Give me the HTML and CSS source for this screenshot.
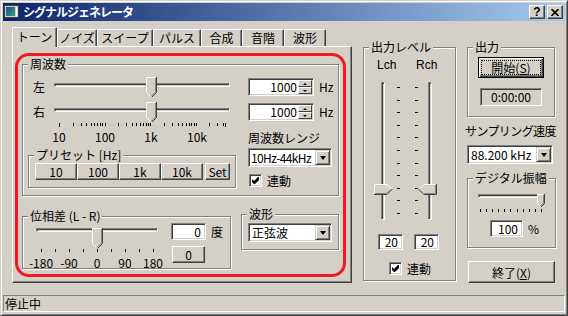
FILE: index.html
```html
<!DOCTYPE html>
<html lang="ja">
<head>
  <meta charset="UTF-8">
  <title>シグナルジェネレータ</title>
  <link rel="stylesheet" href="styles.css">
</head>
<body>
  <div class="window">
    <div class="titlebar">
      <svg class="app-icon" width="16" height="16" viewBox="0 0 16 16">
        <defs>
          <linearGradient id="scr" x1="0" y1="0" x2="1" y2="1">
            <stop offset="0" stop-color="#1c4f9c"/>
            <stop offset="1" stop-color="#34a070"/>
          </linearGradient>
        </defs>
        <rect x="0.5" y="1.5" width="14" height="12" fill="#d4d0c8" stroke="#404040"/>
        <rect x="2" y="3" width="9" height="9" fill="url(#scr)"/>
        <rect x="12" y="3" width="1" height="9" fill="#fff"/>
      </svg>
      <span class="title">シグナルジェネレータ</span>
      <span class="cap-btn">?</span>
      <span class="cap-btn close">
        <svg width="8" height="7" viewBox="0 0 8 7"><path d="M0.5 0L7.5 7M7.5 0L0.5 7" stroke="#000" stroke-width="1.6"/></svg>
      </span>
    </div>

    <div class="client">
      <div class="tabctl">
        <div class="tabstrip">
          <span class="tab active">トーン</span>
          <span class="tab">ノイズ</span>
          <span class="tab">スイープ</span>
          <span class="tab">パルス</span>
          <span class="tab">合成</span>
          <span class="tab">音階</span>
          <span class="tab">波形</span>
        </div>
        <div class="tabpanel">
          <div class="group freq">
            <span class="group-title">周波数</span>
            <div class="freq-body">
              <div class="freq-left">
                <div class="slider-row first">
                  <span class="slider-label">左</span>
                  <div class="hslider wide">
                    <div class="track"></div>
                    <svg class="thumb" style="left:92px" width="11" height="20" viewBox="0 0 11 20">
                      <path d="M0 0H10V15L5 20L0 15Z" fill="#d4d0c8"/>
                      <path d="M0.5 15V0.5H9.5M0.5 15.5L5 20" fill="none" stroke="#fff"/>
                      <path d="M10.5 0V15.5L5.5 20.5" fill="none" stroke="#404040"/>
                      <path d="M9.5 1V15L5 19.5" fill="none" stroke="#808080"/>
                    </svg>
                  </div>
                </div>
                <div class="slider-row">
                  <span class="slider-label">右</span>
                  <div class="hslider wide">
                    <div class="track"></div>
                    <svg class="thumb" style="left:92px" width="11" height="20" viewBox="0 0 11 20">
                      <path d="M0 0H10V15L5 20L0 15Z" fill="#d4d0c8"/>
                      <path d="M0.5 15V0.5H9.5M0.5 15.5L5 20" fill="none" stroke="#fff"/>
                      <path d="M10.5 0V15.5L5.5 20.5" fill="none" stroke="#404040"/>
                      <path d="M9.5 1V15L5 19.5" fill="none" stroke="#808080"/>
                    </svg>
                  </div>
                </div>
                <svg class="freq-ticks" width="176" height="5" shape-rendering="crispEdges">
                  <path stroke="#000" d="M5.5 0v4M19.5 0v3M27.5 0v3M32.5 0v3M37.5 0v3M40.5 0v3M43.5 0v3M46.5 0v3M48.5 0v3M51.5 0v3M64.5 0v3M72.5 0v3M78.5 0v3M82.5 0v3M86.5 0v3M89.5 0v3M92.5 0v3M94.5 0v3M96.5 0v3M110.5 0v3M118.5 0v3M124.5 0v3M128.5 0v3M132.5 0v3M135.5 0v3M137.5 0v3M140.5 0v3M142.5 0v3M155.5 0v3M163.5 0v3M169.5 0v3M171.5 0v4"/>
                </svg>
                <div class="scale freq-scale"><span>10</span><span>100</span><span>1k</span><span>10k</span></div>
                <div class="group preset">
                  <span class="group-title">プリセット [Hz]</span>
                  <div class="preset-btns">
                    <span class="btn">10</span>
                    <span class="btn">100</span>
                    <span class="btn">1k</span>
                    <span class="btn">10k</span>
                    <span class="btn set">Set</span>
                  </div>
                </div>
              </div>
              <div class="freq-right">
                <div class="spin-row first">
                  <div class="spin">
                    <span class="spin-value">1000</span>
                    <span class="spin-btns"><span class="spin-up"></span><span class="spin-down"></span></span>
                  </div>
                  <span class="unit">Hz</span>
                </div>
                <div class="spin-row">
                  <div class="spin">
                    <span class="spin-value">1000</span>
                    <span class="spin-btns"><span class="spin-up"></span><span class="spin-down"></span></span>
                  </div>
                  <span class="unit">Hz</span>
                </div>
                <div class="range-label">周波数レンジ</div>
                <div class="combo range-combo"><span class="combo-text">10Hz-44kHz</span><span class="combo-btn"></span></div>
                <label class="check-row range-link">
                  <span class="check"><svg width="7" height="7" viewBox="0 0 7 7"><path d="M0 2L2 4L6 0H7V3L3 7H2L0 5Z" fill="#000"/></svg></span>連動
                </label>
              </div>
            </div>
          </div>

          <div class="tone-bottom">
            <div class="group phase">
              <span class="group-title">位相差 (L - R)</span>
              <div class="phase-body">
                <div class="phase-slider">
                  <div class="hslider narrow">
                    <div class="track"></div>
                    <svg class="thumb" style="left:56px" width="11" height="20" viewBox="0 0 11 20">
                      <path d="M0 0H10V15L5 20L0 15Z" fill="#d4d0c8"/>
                      <path d="M0.5 15V0.5H9.5M0.5 15.5L5 20" fill="none" stroke="#fff"/>
                      <path d="M10.5 0V15.5L5.5 20.5" fill="none" stroke="#404040"/>
                      <path d="M9.5 1V15L5 19.5" fill="none" stroke="#808080"/>
                    </svg>
                  </div>
                  <svg class="phase-ticks" width="122" height="4" shape-rendering="crispEdges">
                    <path stroke="#000" d="M5.5 0v3M19.5 0v3M33.5 0v3M47.5 0v3M61.5 0v3M75.5 0v3M89.5 0v3M103.5 0v3M117.5 0v3"/>
                  </svg>
                  <div class="scale phase-scale"><span>-180</span><span>-90</span><span>0</span><span>90</span><span>180</span></div>
                </div>
                <div class="phase-side">
                  <div class="phase-value"><span class="edit">0</span><span class="unit">度</span></div>
                  <span class="btn reset">0</span>
                </div>
              </div>
            </div>
            <div class="group wave">
              <span class="group-title">波形</span>
              <div class="combo wave-combo"><span class="combo-text">正弦波</span><span class="combo-btn"></span></div>
            </div>
          </div>

          <div class="annotation"></div>
        </div>
      </div>

      <div class="group level">
        <span class="group-title">出力レベル</span>
        <div class="ch-labels"><span>Lch</span><span>Rch</span></div>
        <div class="vsliders">
          <div class="vslider">
            <div class="vtrack"></div>
            <svg class="vthumb" style="top:102px" width="19" height="11" viewBox="0 0 19 11">
              <path d="M0 0H13L18.5 5.5L13 11H0Z" fill="#d4d0c8"/>
              <path d="M0.5 10.5V0.5H13L18 5.5" fill="none" stroke="#fff"/>
              <path d="M0 10.5H13L18.5 5" fill="none" stroke="#404040"/>
              <path d="M1 9.5H12.5L17 5.5" fill="none" stroke="#808080"/>
            </svg>
          </div>
          <svg class="level-ticks" width="25" height="138" shape-rendering="crispEdges">
            <path stroke="#000" d="M4 5.5h3M22 5.5h3M4 18.5h3M22 18.5h3M4 30.5h3M22 30.5h3M4 43.5h3M22 43.5h3M4 55.5h3M22 55.5h3M4 68.5h3M22 68.5h3M4 81.5h3M22 81.5h3M4 93.5h3M22 93.5h3M4 106.5h3M22 106.5h3M4 118.5h3M22 118.5h3M4 131.5h3M22 131.5h3"/>
          </svg>
          <div class="vslider right">
            <div class="vtrack"></div>
            <svg class="vthumb" style="top:102px" width="19" height="11" viewBox="0 0 19 11">
              <path d="M19 0H6L0.5 5.5L6 11H19Z" fill="#d4d0c8"/>
              <path d="M1 5.5L6 0.5H18.5" fill="none" stroke="#fff"/>
              <path d="M18.5 0V10.5H6L0.5 5" fill="none" stroke="#404040"/>
              <path d="M17.5 1V9.5H6.5" fill="none" stroke="#808080"/>
            </svg>
          </div>
        </div>
        <div class="level-edits"><span class="edit">20</span><span class="edit">20</span></div>
        <label class="check-row level-link">
          <span class="check"><svg width="7" height="7" viewBox="0 0 7 7"><path d="M0 2L2 4L6 0H7V3L3 7H2L0 5Z" fill="#000"/></svg></span>連動
        </label>
      </div>

      <div class="side">
        <div class="group out">
          <span class="group-title">出力</span>
          <span class="btn start"><span class="focus">開始(<u>S</u>)</span></span>
          <span class="time">0:00:00</span>
        </div>
        <div class="rate-label">サンプリング速度</div>
        <div class="combo rate-combo"><span class="combo-text">88.200 kHz</span><span class="combo-btn"></span></div>
        <div class="group amp">
          <span class="group-title">デジタル振幅</span>
          <div class="hslider amp-slider">
            <div class="track"></div>
            <svg class="thumb" style="left:59px" width="8" height="13" viewBox="0 0 8 13">
              <path d="M0 0H7V9L3.5 12.5L0 9Z" fill="#d4d0c8"/>
              <path d="M0.5 9V0.5H6.5M0.5 9.5L3.5 12.5" fill="none" stroke="#fff"/>
              <path d="M7.5 0V9.5L4 13" fill="none" stroke="#404040"/>
              <path d="M6.5 1V9L3.5 12" fill="none" stroke="#808080"/>
            </svg>
          </div>
          <svg class="amp-ticks" width="67" height="3" shape-rendering="crispEdges">
            <path stroke="#000" d="M2.5 0v3M8.5 0v3M14.5 0v3M20.5 0v3M26.5 0v3M32.5 0v3M39.5 0v3M45.5 0v3M51.5 0v3M57.5 0v3M63.5 0v3"/>
          </svg>
          <div class="amp-value"><span class="edit">100</span><span class="unit">%</span></div>
        </div>
        <span class="btn quit">終了(<u>X</u>)</span>
      </div>
    </div>

    <div class="statusbar">
      <div class="status-cell">停止中</div>
    </div>
  </div>
</body>
</html>
```

FILE: styles.css
```css
body {
  margin: 0;
  background: #d4d0c8;
  font-family: "Noto Sans CJK JP", sans-serif;
  font-size: 12px;
  color: #000;
}
.window {
  width: 568px;
  height: 316px;
  box-sizing: border-box;
  border: 1px solid;
  border-color: #d4d0c8 #404040 #404040 #d4d0c8;
  box-shadow: inset 1px 1px #fff, inset -1px -1px #808080;
  padding: 2px;
  display: flex;
  flex-direction: column;
  background: #d4d0c8;
}

/* title bar */
.titlebar {
  height: 18px;
  flex-shrink: 0;
  display: flex;
  align-items: center;
  background: linear-gradient(to right, #0a246a, #a6caf0);
  color: #fff;
}
.app-icon {
  margin-left: 1px;
}
.title {
  flex: 1;
  margin-left: 3px;
  font-weight: bold;
  letter-spacing: -1px;
  line-height: 18px;
}
.cap-btn {
  width: 16px;
  height: 14px;
  box-sizing: border-box;
  margin-left: 2px;
  border: 1px solid;
  border-color: #fff #404040 #404040 #fff;
  box-shadow: inset -1px -1px #808080;
  background: #d4d0c8;
  color: #000;
  display: flex;
  align-items: center;
  justify-content: center;
  font-family: "Liberation Sans", sans-serif;
  font-weight: bold;
  font-size: 12px;
  line-height: 12px;
}
.cap-btn.close {
  margin-right: 2px;
}

/* common 3d pieces */
.btn {
  display: flex;
  align-items: center;
  justify-content: center;
  box-sizing: border-box;
  border: 1px solid;
  border-color: #fff #404040 #404040 #fff;
  box-shadow: inset -1px -1px #808080;
  background: #d4d0c8;
}
.edit {
  display: block;
  box-sizing: border-box;
  border: 1px solid;
  border-color: #808080 #fff #fff #808080;
  box-shadow: inset 1px 1px #404040, inset -1px -1px #d4d0c8;
  background: #fff;
  text-align: right;
  padding-right: 4px;
}
.combo {
  display: flex;
  box-sizing: border-box;
  height: 19px;
  border: 1px solid;
  border-color: #808080 #fff #fff #808080;
  box-shadow: inset 1px 1px #404040, inset -1px -1px #d4d0c8;
  background: #fff;
  padding: 1px;
}
.combo-text {
  flex: 1;
  padding-left: 2px;
  line-height: 15px;
  white-space: nowrap;
  overflow: hidden;
}
.combo-btn {
  width: 15px;
  flex-shrink: 0;
  box-sizing: border-box;
  border: 1px solid;
  border-color: #d4d0c8 #404040 #404040 #d4d0c8;
  box-shadow: inset 1px 1px #fff, inset -1px -1px #808080;
  background: #d4d0c8;
  display: flex;
  align-items: center;
  justify-content: center;
}
.combo-btn::after {
  content: "";
  border-left: 3.5px solid transparent;
  border-right: 3.5px solid transparent;
  border-top: 4px solid #000;
}
.check-row {
  display: flex;
  align-items: center;
  line-height: 13px;
}
.check {
  width: 13px;
  height: 13px;
  box-sizing: border-box;
  margin-right: 5px;
  border: 1px solid;
  border-color: #808080 #fff #fff #808080;
  box-shadow: inset 1px 1px #404040, inset -1px -1px #d4d0c8;
  background: #fff;
  display: flex;
  align-items: center;
  justify-content: center;
}
.unit {
  margin-left: 5px;
}

/* group boxes */
.group {
  box-sizing: border-box;
  border: 1px solid #808080;
  box-shadow: 1px 1px #fff, inset 1px 1px #fff;
}
.group-title {
  display: block;
  width: max-content;
  margin: -8px 0 0 5px;
  padding: 0 2px;
  background: #d4d0c8;
  line-height: 14px;
}

/* sliders */
.hslider {
  position: relative;
}
.track, .vtrack {
  box-sizing: border-box;
  border: 1px solid;
  border-color: #808080 #fff #fff #808080;
  box-shadow: inset 1px 1px #404040;
  background: #d4d0c8;
}
.track {
  height: 4px;
  margin-top: 6px;
}
.thumb, .vthumb {
  position: absolute;
  top: 0;
}
.vthumb {
  left: 0;
}
.scale {
  display: flex;
  line-height: 14px;
}
.scale span {
  text-align: center;
  flex-shrink: 0;
}

/* layout */
.client {
  flex: 1;
  display: flex;
  align-items: flex-start;
  padding: 5px 0 0 9px;
}
.tabctl {
  width: 340px;
}
.tabstrip {
  height: 20px;
  display: flex;
  align-items: flex-end;
}
.tab {
  height: 17px;
  box-sizing: border-box;
  border: 1px solid;
  border-color: #fff #404040 transparent #fff;
  border-bottom: none;
  border-radius: 2px 2px 0 0;
  box-shadow: inset -1px 0 #808080;
  text-align: center;
  line-height: 16px;
  background: #d4d0c8;
}
.tab:nth-child(1) { width: 45px; }
.tab:nth-child(2) { width: 40px; }
.tab:nth-child(3) { width: 56px; }
.tab:nth-child(4) { width: 48px; }
.tab:nth-child(5) { width: 41px; }
.tab:nth-child(6) { width: 42px; }
.tab:nth-child(7) { width: 42px; }
.tab.active {
  height: 20px;
  margin-bottom: -1px;
  line-height: 18px;
  position: relative;
  z-index: 1;
}
.tabpanel {
  height: 237px;
  box-sizing: border-box;
  border: 1px solid;
  border-color: #fff #404040 #404040 #fff;
  box-shadow: inset -1px -1px #808080;
  position: relative;
  padding: 17px 0 0 9px;
}

/* frequency */
.freq {
  width: 317px;
  height: 132px;
}
.freq-body {
  display: flex;
}
.freq-left {
  width: 225px;
}
.slider-row {
  display: flex;
  margin: 5px 0 0 10px;
}
.slider-row.first {
  margin-top: 6px;
}
.slider-label {
  width: 21px;
  line-height: 20px;
}
.hslider.wide {
  width: 176px;
  height: 20px;
}
.freq-ticks {
  display: block;
  margin: 1px 0 0 31px;
}
.freq-scale {
  margin: 2px 0 0 13px;
}
.freq-scale span {
  width: 46px;
}
.preset {
  width: 208px;
  height: 33px;
  margin: 11px 0 0 5px;
}
.preset-btns {
  display: flex;
  margin: 1px 0 0 6px;
}
.preset-btns .btn {
  width: 42px;
  height: 17px;
  line-height: 15px;
}
.preset-btns .btn.set {
  width: 25px;
  margin-left: 2px;
}
.spin-row {
  display: flex;
  align-items: center;
  margin-top: 7px;
  line-height: 18px;
}
.spin {
  display: flex;
  width: 66px;
  height: 18px;
  box-sizing: border-box;
  border: 1px solid;
  border-color: #808080 #fff #fff #808080;
  box-shadow: inset 1px 1px #404040, inset -1px -1px #d4d0c8;
  background: #fff;
  padding: 1px;
}
.spin-value {
  flex: 1;
  text-align: right;
  padding-right: 1px;
  line-height: 14px;
}
.spin-btns {
  width: 14px;
  display: flex;
  flex-direction: column;
}
.spin-up, .spin-down {
  height: 7px;
  box-sizing: border-box;
  border: 1px solid;
  border-color: #fff #404040 #404040 #fff;
  background: #d4d0c8;
  display: flex;
  align-items: center;
  justify-content: center;
}
.spin-up::after, .spin-down::after {
  content: "";
  border-left: 2px solid transparent;
  border-right: 2px solid transparent;
}
.spin-up::after {
  border-bottom: 2px solid #000;
}
.spin-down::after {
  border-top: 2px solid #000;
}
.range-label {
  margin-top: 10px;
  line-height: 14px;
}
.range-combo {
  width: 84px;
  margin-top: 3px;
}
.range-combo .combo-text {
  padding-left: 1px;
  letter-spacing: -0.6px;
}
.range-link {
  margin: 7px 0 0 1px;
}

/* phase + waveform */
.tone-bottom {
  display: flex;
  align-items: flex-start;
  margin-top: 18px;
}
.phase {
  width: 209px;
  height: 53px;
  margin-top: 2px;
}
.phase-body {
  display: flex;
  align-items: flex-start;
}
.phase-slider {
  width: 122px;
  margin: -1px 0 0 13px;
}
.hslider.narrow {
  width: 122px;
  height: 20px;
}
.phase-ticks {
  display: block;
  margin-top: 1px;
}
.phase-scale {
  margin: 3px 0 0 -9px;
}
.phase-scale span {
  width: 28px;
}
.phase-side {
  margin-left: 13px;
}
.phase-value {
  display: flex;
  align-items: center;
}
.phase-value .edit {
  width: 35px;
  height: 17px;
  line-height: 15px;
}
.btn.reset {
  width: 33px;
  height: 17px;
  margin: 6px 0 0 1px;
}
.wave {
  width: 98px;
  height: 36px;
  margin-left: 10px;
}
.wave-combo {
  width: 84px;
  margin: 2px 0 0 6px;
}
.annotation {
  position: absolute;
  left: 2px;
  top: 6px;
  width: 331px;
  height: 224px;
  box-sizing: border-box;
  border: 3px solid #ed1c24;
  border-radius: 14px;
  pointer-events: none;
}

/* output level */
.level {
  width: 93px;
  height: 234px;
  margin: 21px 0 0 11px;
}
.ch-labels {
  display: flex;
  margin: 4px 0 0 13px;
  line-height: 14px;
  font-family: "Liberation Sans", sans-serif;
}
.ch-labels span {
  width: 41px;
}
.vsliders {
  display: flex;
  height: 138px;
  margin: 10px 0 0 10px;
}
.vslider {
  position: relative;
  width: 19px;
  height: 138px;
}
.vtrack {
  width: 4px;
  height: 138px;
  margin-left: 7px;
}
.vslider.right .vtrack {
  margin-left: 10px;
}
.level-edits {
  display: flex;
  gap: 11px;
  margin: 14px 0 0 14px;
}
.level-edits .edit {
  width: 25px;
  height: 16px;
  line-height: 14px;
}
.level-link {
  margin: 12px 0 0 25px;
}

/* right side */
.side {
  width: 89px;
  margin: 21px 0 0 11px;
}
.out {
  width: 88px;
  height: 70px;
}
.btn.start {
  width: 66px;
  height: 21px;
  margin: 3px 0 0 10px;
  border-color: #000;
  box-shadow: inset 1px 1px #fff, inset -1px -1px #404040, inset -2px -2px #808080;
  padding: 2px;
}
.focus {
  display: block;
  width: 100%;
  height: 100%;
  box-sizing: border-box;
  border: 1px dotted #000;
  text-align: center;
  line-height: 13px;
}
.time {
  display: block;
  width: 62px;
  height: 18px;
  box-sizing: border-box;
  margin: 10px 0 0 12px;
  border: 1px solid;
  border-color: #808080 #fff #fff #808080;
  box-shadow: inset 1px 1px #404040;
  text-align: center;
  line-height: 16px;
}
.rate-label {
  margin: 7px 0 0 -2px;
  line-height: 14px;
  letter-spacing: -0.6px;
  white-space: nowrap;
}
.rate-combo {
  width: 86px;
  margin-top: 7px;
}
.amp {
  width: 89px;
  height: 70px;
  margin-top: 14px;
}
.amp-slider {
  width: 67px;
  height: 13px;
  margin: 9px 0 0 10px;
}
.amp-slider .track {
  margin-top: 4px;
}
.amp-ticks {
  display: block;
  margin: 2px 0 0 10px;
}
.amp-value {
  display: flex;
  align-items: center;
  margin: 8px 0 0 22px;
}
.amp-value .edit {
  width: 33px;
  height: 17px;
  line-height: 15px;
}
.btn.quit {
  width: 87px;
  height: 22px;
  margin: 13px 0 0 1px;
}

/* status bar */
.statusbar {
  height: 19px;
  flex-shrink: 0;
  box-sizing: border-box;
  padding: 1px 0;
}
.status-cell {
  height: 17px;
  box-sizing: border-box;
  border: 1px solid;
  border-color: #808080 #fff #fff #808080;
  padding-left: 1px;
  line-height: 15px;
}
```
